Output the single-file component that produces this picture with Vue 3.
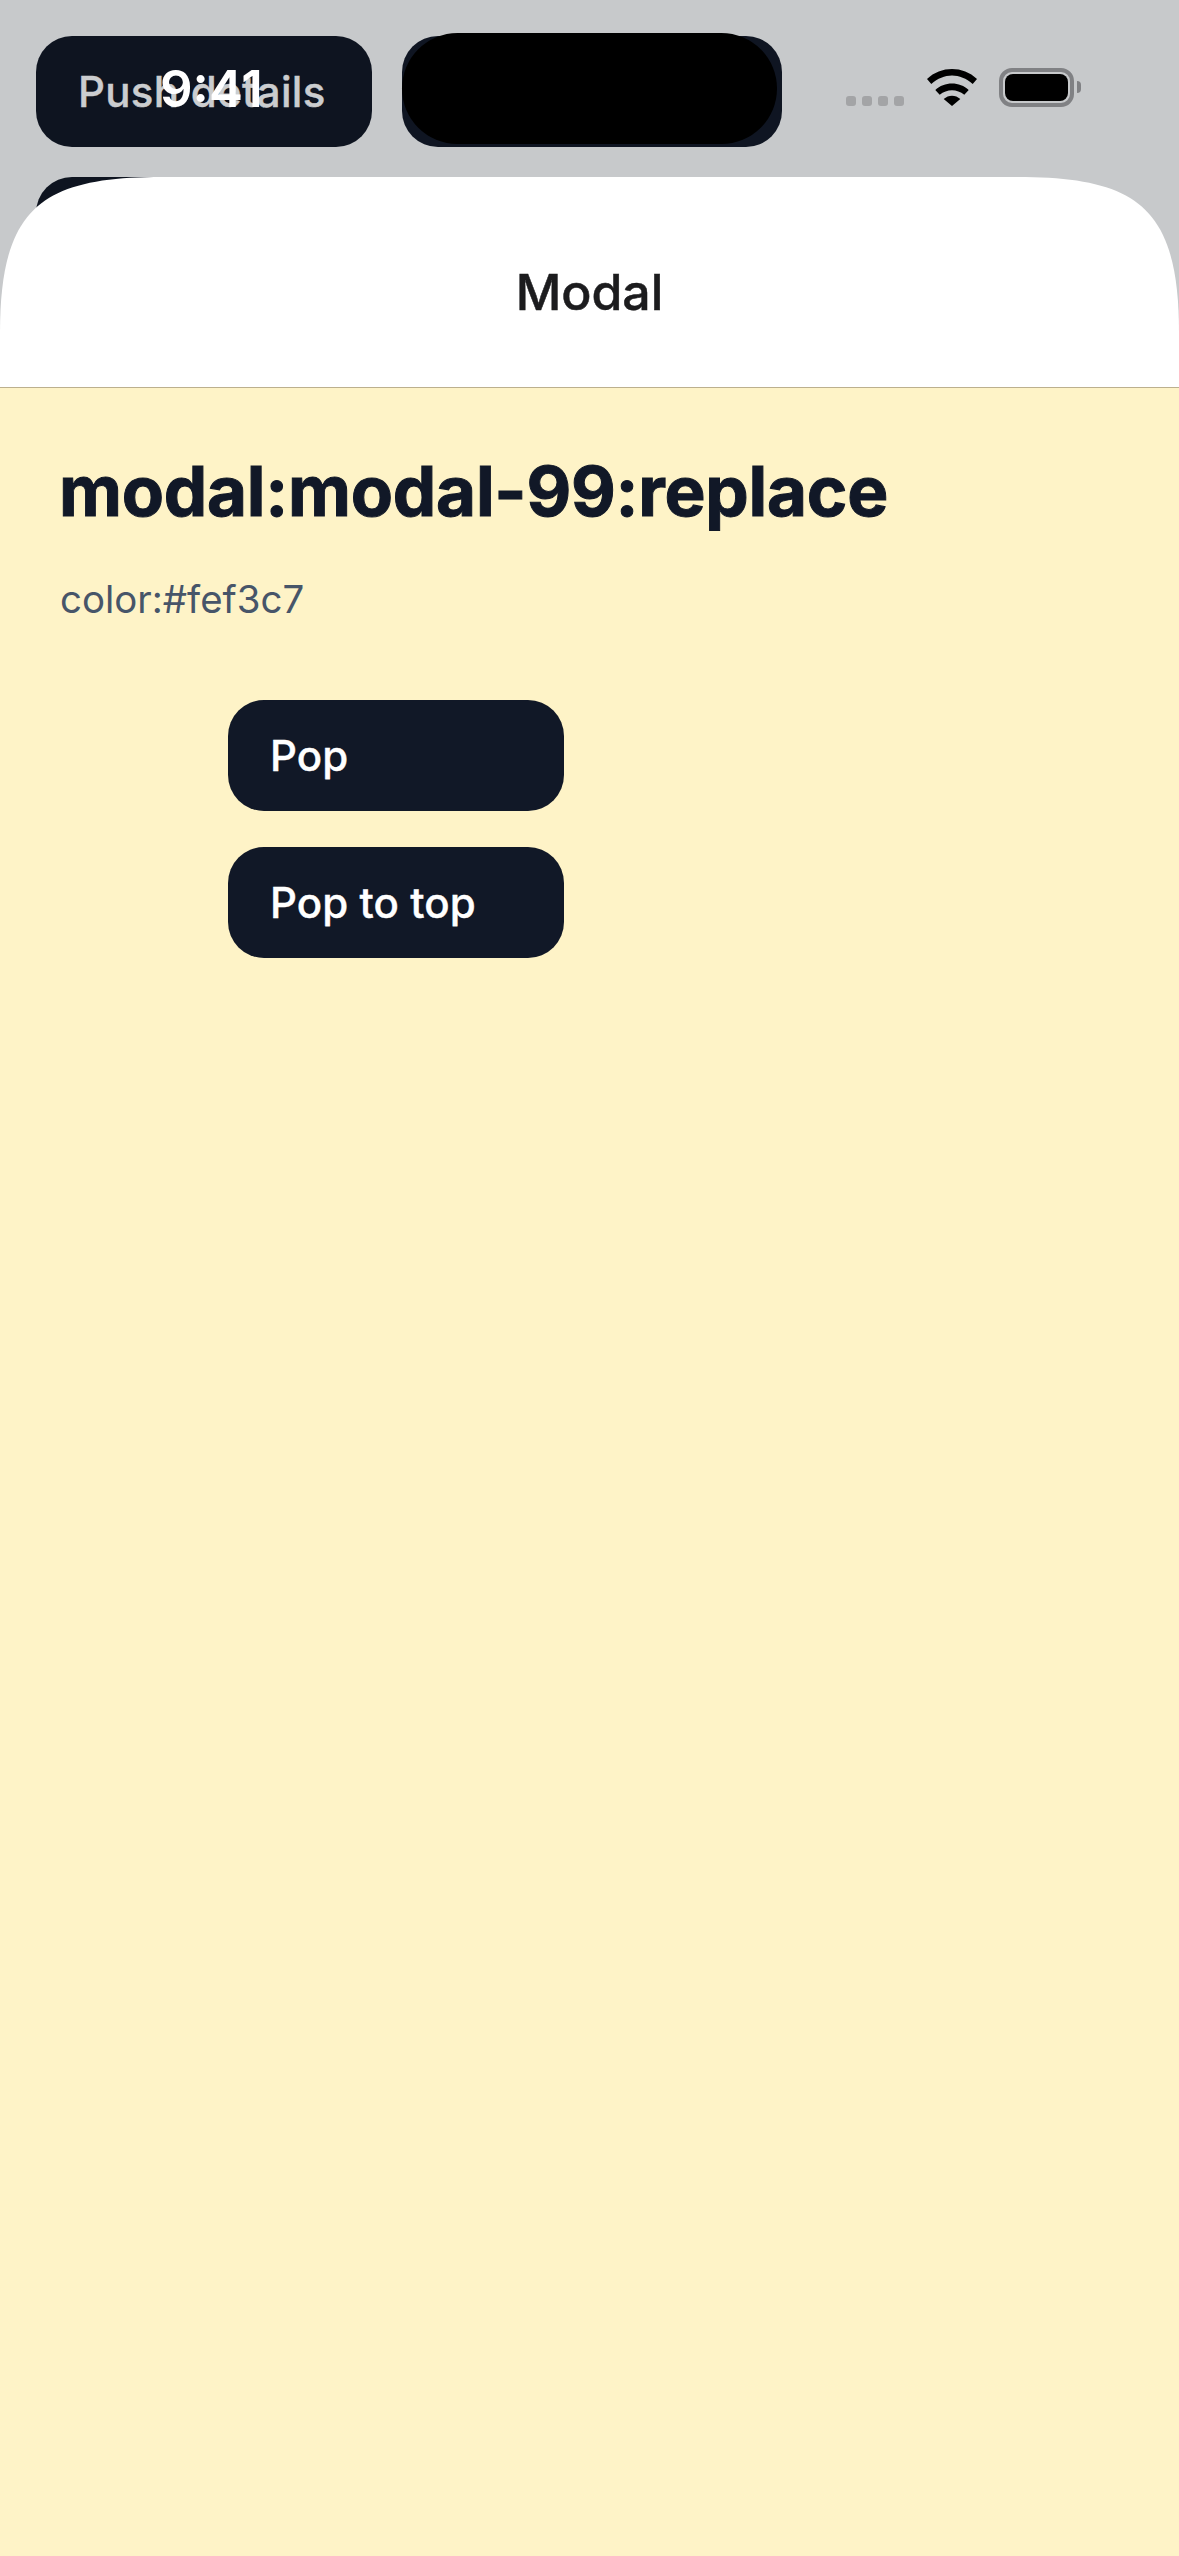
<script setup>
const actions = ['Pop', 'Pop to top']
</script>

<template>
  <div class="screen">
    <div class="behind">
      <div class="back-btn first">Push details</div>
      <div class="back-btn second"></div>
      <div class="back-btn third"></div>
    </div>

    <div class="status">
      <span class="time">9:41</span>
      <div class="island"></div>
      <div class="indicators">
        <div class="cells"><i></i><i></i><i></i><i></i></div>
        <svg class="wifi" viewBox="0 0 50 37" width="50" height="37">
          <path d="M0 10 C14 -3.3 36 -3.3 50 10 L45.7 15 C33 3.5 17 3.5 4.3 15 Z" />
          <path d="M8.3 21 C17 12.3 33 12.3 41.7 21 L37.3 25.7 C30 19.7 20 19.7 12.7 25.7 Z" />
          <path d="M16.7 30 C21.5 25.5 28.5 25.5 33.3 30 L25 37 Z" />
        </svg>
        <div class="battery"><div class="charge"></div></div>
        <div class="cap"></div>
      </div>
    </div>

    <section class="sheet">
      <header class="sheet-head">Modal</header>
      <div class="sheet-body">
        <h1>modal:modal-99:replace</h1>
        <p>color:#fef3c7</p>
        <div class="actions">
          <button v-for="a in actions" :key="a" class="action">{{ a }}</button>
        </div>
      </div>
    </section>
  </div>
</template>

<style scoped>
.screen {
  position: relative;
  width: 1179px;
  height: 2556px;
  overflow: hidden;
  background: #c7c9cb;
  font-family: Inter, "Liberation Sans", sans-serif;
}
.behind {
  display: flex;
  flex-wrap: wrap;
  gap: 30px;
  width: 800px;
  padding: 36px 0 0 36px;
}
.back-btn {
  box-sizing: border-box;
  height: 111px;
  border-radius: 36px;
  background: #0e1420;
  color: #cbcdcf;
  font-size: 42px;
  font-weight: 500;
  letter-spacing: 0.3px;
  line-height: 111px;
  padding-left: 42px;
  -webkit-text-stroke: 0.4px #cbcdcf;
}
.first { width: 336px; }
.second { width: 380px; background: #0f1522; }
.third { width: 336px; }
.status {
  position: absolute;
  inset: 0 0 auto 0;
  height: 177px;
}
.time {
  position: absolute;
  left: 160px;
  top: 58px;
  font-size: 51px;
  font-weight: 600;
  line-height: 62px;
  color: #fff;
}
.island {
  position: absolute;
  left: 402px;
  top: 33px;
  width: 375px;
  height: 111px;
  border-radius: 55.5px;
  background: #000;
}
.indicators {
  position: absolute;
  left: 846px;
  top: 68px;
  width: 235px;
  height: 39px;
}
.cells {
  position: absolute;
  left: 0;
  top: 28px;
  display: flex;
  gap: 6px;
}
.cells i {
  display: block;
  width: 10px;
  height: 10px;
  border-radius: 3px;
  background: #a3a4a6;
}
.wifi {
  position: absolute;
  left: 81px;
  top: 1px;
  fill: #000;
}
.battery {
  position: absolute;
  left: 153px;
  top: 0;
  box-sizing: border-box;
  width: 75px;
  height: 39px;
  padding: 2px;
  border: 4px solid #808184;
  border-radius: 13px;
}
.charge {
  width: 100%;
  height: 100%;
  border-radius: 8px;
  background: #000;
}
.cap {
  position: absolute;
  left: 231px;
  top: 13px;
  width: 4px;
  height: 12px;
  border-radius: 0 4px 4px 0;
  background: #808184;
}
.sheet {
  position: absolute;
  left: 0;
  top: 177px;
  width: 1179px;
  height: 2379px;
  display: flex;
  flex-direction: column;
  clip-path: path("M0 156 C0 30 42 0 162 0 L1017 0 C1137 0 1179 30 1179 156 L1179 2379 L0 2379 Z");
}
.sheet-head {
  box-sizing: border-box;
  height: 211px;
  flex: none;
  display: flex;
  align-items: center;
  justify-content: center;
  padding-top: 20px;
  background: #fff;
  border-bottom: 1px solid #bcb08e;
  color: #1c1c1e;
  font-size: 50px;
  font-weight: 500;
  -webkit-text-stroke: 0.5px #1c1c1e;
}
.sheet-body {
  flex: 1;
  background: #fef3c7;
  padding: 60px;
}
h1 {
  margin: 1px 0 0 -1px;
  color: #111827;
  font-size: 69px;
  font-weight: 700;
  letter-spacing: -0.25px;
  line-height: 84px;
  -webkit-text-stroke: 1px #111827;
}
p {
  margin: 39px 0 0;
  color: #475569;
  font-size: 38.4px;
  line-height: 54px;
}
.actions {
  display: flex;
  flex-direction: column;
  gap: 36px;
  margin: 74px 0 0 168px;
}
.action {
  box-sizing: border-box;
  width: 336px;
  height: 111px;
  padding: 0 0 0 42px;
  border: 0;
  border-radius: 36px;
  background: #111827;
  color: #fff;
  font: 500 42px Inter, "Liberation Sans", sans-serif;
  letter-spacing: 0.1px;
  text-align: left;
  -webkit-text-stroke: 0.4px #fff;
}
</style>
